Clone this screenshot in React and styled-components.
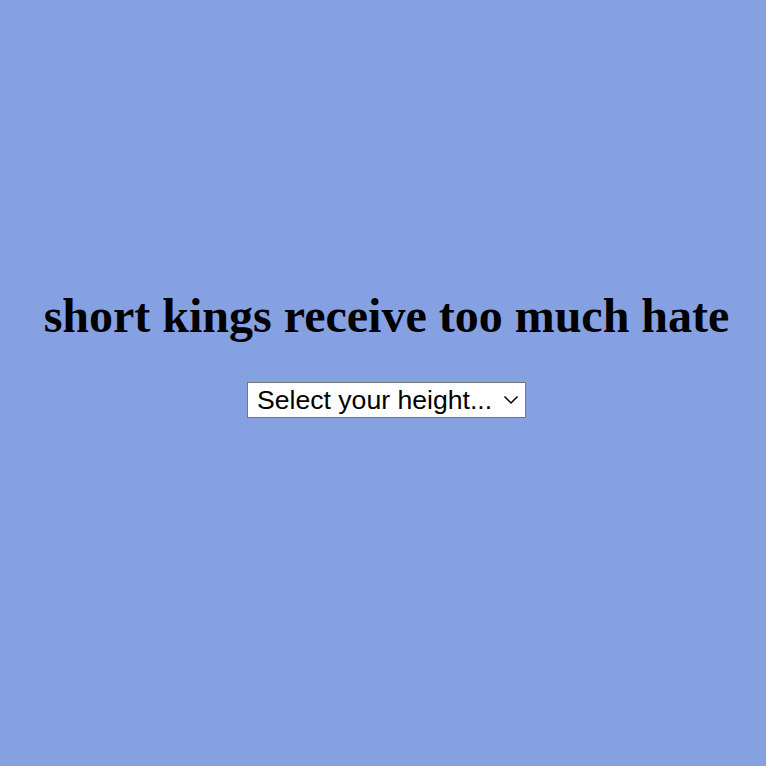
import React, { useState } from 'react'
import styled, { createGlobalStyle } from 'styled-components'

const GlobalStyle = createGlobalStyle`
html, body {
    margin: 0;
    padding: 0;
    background: #86a1e2;
}
`;

const Page = styled.div`
display: flex;
flex-direction: column;
align-items: center;
justify-content: center;
min-height: 100vh;
box-sizing: border-box;
padding: 0 0 58px 7px;
`;

const Title = styled.h1`
margin: 0 0 40px 0;
font-family: "Liberation Serif", "Times New Roman", serif;
font-weight: bold;
font-size: 48px;
line-height: 1.1;
color: #000;
`;

const SelectWrap = styled.div`
position: relative;
display: inline-block;
`;

const Picker = styled.select`
appearance: none;
-webkit-appearance: none;
width: 279px;
height: 36px;
box-sizing: border-box;
padding: 0 30px 0 9px;
border: 1px solid #767676;
border-radius: 0;
background: #fff;
font-family: "Liberation Sans", Arial, sans-serif;
font-size: 26.6px;
color: #000;
`;

const Chevron = styled.svg`
position: absolute;
right: 7px;
top: 50%;
transform: translateY(-50%);
pointer-events: none;
`;

const heights = ['Under 5\'0"', '5\'0" - 5\'4"', '5\'5" - 5\'8"', '5\'9" - 6\'0"', 'Over 6\'0"'];

const App = () => {
    const [height, setHeight] = useState('');

    return (
        <Page>
            <GlobalStyle />
            <Title>short kings receive too much hate</Title>
            <SelectWrap>
                <Picker value={height} onChange={e => setHeight(e.target.value)}>
                    <option value="">Select your height...</option>
                    {heights.map((h, i) => (
                        <option key={i} value={h}>{h}</option>
                    ))}
                </Picker>
                <Chevron width="16" height="10" viewBox="0 0 16 10">
                    <path d="M1.5 1.5 L8 8 L14.5 1.5" fill="none" stroke="#000" strokeWidth="1.5" />
                </Chevron>
            </SelectWrap>
        </Page>
    )
};

export default App
